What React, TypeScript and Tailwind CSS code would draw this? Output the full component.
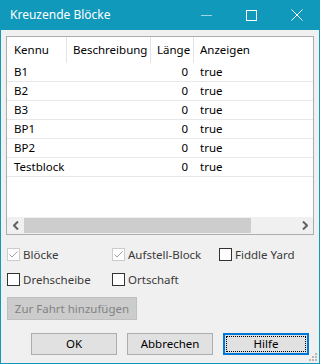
import React from "react";

const rows = ["B1", "B2", "B3", "BP1", "BP2", "Testblock"];

const font = { fontFamily: '"Noto Sans", "Liberation Sans", sans-serif' };

const CheckBox = ({ label, checked }: { label: string; checked?: boolean }) => (
  <div className="flex items-center h-[13px]">
    <div
      className={`w-[13px] h-[13px] border bg-white flex items-center justify-center ${
        checked ? "border-[#cccccc]" : "border-[#333333]"
      }`}
    >
      {checked && (
        <svg width="11" height="11" viewBox="0 0 11 11">
          <path d="M1.5 5.5 L4 8 L9.5 2.5" fill="none" stroke="#a0a0a0" strokeWidth="1" />
        </svg>
      )}
    </div>
    <span className="ml-[3px] text-[11.5px] leading-none text-[#3a3a3a]">{label}</span>
  </div>
);

export default function App() {
  return (
    <div
      className="w-[320px] h-[364px] flex flex-col bg-[#f0f0f0] border-x border-b border-[#1199bb] text-black relative"
      style={font}
    >
      {/* title bar */}
      <div className="h-[30px] bg-[#1199bb] flex items-center -mx-px px-[10px] text-white text-[12px]">
        <span className="flex-1">Kreuzende Blöcke</span>
        <div className="w-[11px] h-px bg-[#9fd5e3] mr-[34px]" />
        <div className="w-[11px] h-[11px] border border-white mr-[34px]" />
        <svg width="12" height="12" viewBox="0 0 12 12" className="mr-[7px]">
          <path d="M0.5 0.5 L11.5 11.5 M11.5 0.5 L0.5 11.5" stroke="white" strokeWidth="1" />
        </svg>
      </div>

      <div className="flex flex-col px-[5px]">
        {/* list */}
        <div className="mt-[6px] h-[199px] border border-[#adadad] bg-white flex flex-col text-[11.5px]">
          <div className="h-[26px] flex items-stretch">
            <div className="w-[60px] flex items-center pl-[7px] border-r border-[#e5e5e5]">Kennu</div>
            <div className="w-[84px] flex items-center pl-[6px] border-r border-[#e5e5e5]">Beschreibung</div>
            <div className="w-[43px] flex items-center pl-[6px] border-r border-[#e5e5e5]">Länge</div>
            <div className="flex-1 flex items-center pl-[6px]">Anzeigen</div>
          </div>
          {rows.map((r) => (
            <div key={r} className="h-[19px] flex items-center border-b border-[#e8e8e8]">
              <div className="w-[60px] pl-[7px]">{r}</div>
              <div className="w-[84px]" />
              <div className="w-[43px] text-right pr-[6px]">0</div>
              <div className="flex-1 pl-[6px]">true</div>
            </div>
          ))}
          <div className="flex-1" />
          <div className="h-[17px] flex items-center bg-[#f0f0f0]">
            <div className="w-[17px] flex justify-center">
              <svg width="6" height="9" viewBox="0 0 6 9">
                <path d="M5 0.5 L1 4.5 L5 8.5" fill="none" stroke="#606060" strokeWidth="2" />
              </svg>
            </div>
            <div className="w-[227px] h-[15px] bg-[#cdcdcd]" />
            <div className="flex-1" />
            <div className="w-[17px] flex justify-center">
              <svg width="6" height="9" viewBox="0 0 6 9">
                <path d="M1 0.5 L5 4.5 L1 8.5" fill="none" stroke="#606060" strokeWidth="2" />
              </svg>
            </div>
          </div>
        </div>

        {/* checkboxes */}
        <div className="mt-[13px] flex pl-px">
          <div className="w-[105px]">
            <CheckBox label="Blöcke" checked />
          </div>
          <div className="w-[107px]">
            <CheckBox label="Aufstell-Block" checked />
          </div>
          <CheckBox label="Fiddle Yard" />
        </div>
        <div className="mt-[12px] flex pl-px">
          <div className="w-[105px]">
            <CheckBox label="Drehscheibe" />
          </div>
          <CheckBox label="Ortschaft" />
        </div>

        <div className="mt-[11px] pl-px">
          <div className="w-[130px] h-[23px] border border-[#bfbfbf] bg-[#cccccc] text-[#838383] text-[11.5px] flex items-center justify-center">
            Zur Fahrt hinzufügen
          </div>
        </div>

        {/* bottom buttons */}
        <div className="mt-[13px] flex pl-[25px] gap-[10px] text-[11.5px]">
          <div className="w-[86px] h-[22px] border border-[#adadad] bg-[#e1e1e1] flex items-center justify-center">
            OK
          </div>
          <div className="w-[86px] h-[22px] border border-[#adadad] bg-[#e1e1e1] flex items-center justify-center">
            Abbrechen
          </div>
          <div className="w-[86px] h-[22px] border-2 border-[#0078d7] bg-[#e1e1e1] p-px">
            <div className="w-full h-full border border-dotted border-black flex items-center justify-center">
              Hilfe
            </div>
          </div>
        </div>
      </div>

      {/* size grip */}
      <svg width="9" height="9" viewBox="0 0 9 9" className="absolute right-[1px] bottom-[1px]">
        <rect x="6" y="0" width="2" height="2" fill="#b8b8b8" />
        <rect x="3" y="3" width="2" height="2" fill="#b8b8b8" />
        <rect x="6" y="3" width="2" height="2" fill="#b8b8b8" />
        <rect x="0" y="6" width="2" height="2" fill="#b8b8b8" />
        <rect x="3" y="6" width="2" height="2" fill="#b8b8b8" />
        <rect x="6" y="6" width="2" height="2" fill="#b8b8b8" />
      </svg>
    </div>
  );
}
